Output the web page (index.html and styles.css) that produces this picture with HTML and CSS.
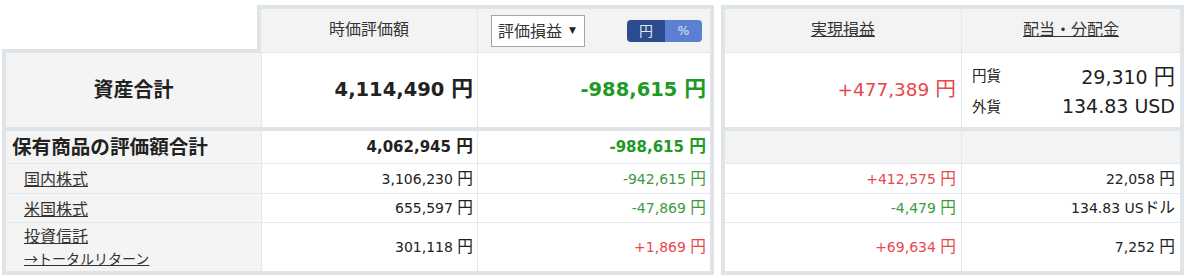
FILE: index.html
```html
<!DOCTYPE html>
<html lang="ja">
<head>
<meta charset="utf-8">
<title>資産合計</title>
<link rel="stylesheet" href="styles.css">
</head>
<body>
<div class="wrap">
  <table class="tbl tbl-left">
    <colgroup><col class="c-label"><col class="c-val"><col class="c-gain"></colgroup>
    <thead>
      <tr>
        <th class="blank"></th>
        <th class="h">時価評価額</th>
        <th class="h h-last">
          <div class="sel-row">
            <span class="select">評価損益<span class="caret">▼</span></span>
            <span class="toggle"><span class="t-yen">円</span><span class="t-pct">%</span></span>
          </div>
        </th>
      </tr>
    </thead>
    <tbody>
      <tr class="r-total">
        <th class="lbl lbl-big">資産合計</th>
        <td class="num num-big">4,114,490 <span class="yen">円</span></td>
        <td class="num num-big green-b c-last">-988,615 <span class="yen">円</span></td>
      </tr>
      <tr class="r-sum">
        <th class="lbl lbl-sum">保有商品の評価額合計</th>
        <td class="num num-bold">4,062,945 <span class="yen">円</span></td>
        <td class="num num-bold green-b c-last">-988,615 <span class="yen">円</span></td>
      </tr>
      <tr class="r-item r-30">
        <th class="lbl lbl-item"><a href="#">国内株式</a></th>
        <td class="num">3,106,230 <span class="yen">円</span></td>
        <td class="num green c-last">-942,615 <span class="yen">円</span></td>
      </tr>
      <tr class="r-item r-29">
        <th class="lbl lbl-item"><a href="#">米国株式</a></th>
        <td class="num">655,597 <span class="yen">円</span></td>
        <td class="num green c-last">-47,869 <span class="yen">円</span></td>
      </tr>
      <tr class="r-item r-last">
        <th class="lbl lbl-item"><a href="#">投資信託</a><br><a href="#" class="small-link">→トータルリターン</a></th>
        <td class="num">301,118 <span class="yen">円</span></td>
        <td class="num red c-last">+1,869 <span class="yen">円</span></td>
      </tr>
    </tbody>
  </table>

  <table class="tbl tbl-right">
    <colgroup><col class="c-real"><col class="c-div"></colgroup>
    <thead>
      <tr>
        <th class="h h-first"><a href="#">実現損益</a></th>
        <th class="h h-last"><a href="#">配当・分配金</a></th>
      </tr>
    </thead>
    <tbody>
      <tr class="r-total">
        <td class="num num-big-r red c-first">+477,389 <span class="yen">円</span></td>
        <td class="div-cell c-last">
          <div class="div-grid">
            <span class="cur">円貨</span><span class="cur-val">29,310 <span class="yen">円</span></span>
            <span class="cur">外貨</span><span class="cur-val">134.83 USD</span>
          </div>
        </td>
      </tr>
      <tr class="r-sum">
        <td class="gray c-first"></td>
        <td class="gray c-last"></td>
      </tr>
      <tr class="r-item r-30">
        <td class="num red c-first">+412,575 <span class="yen">円</span></td>
        <td class="num c-last">22,058 <span class="yen">円</span></td>
      </tr>
      <tr class="r-item r-29">
        <td class="num green c-first">-4,479 <span class="yen">円</span></td>
        <td class="num c-last">134.83 US<span class="yen">ドル</span></td>
      </tr>
      <tr class="r-item r-last">
        <td class="num red c-first">+69,634 <span class="yen">円</span></td>
        <td class="num c-last">7,252 <span class="yen">円</span></td>
      </tr>
    </tbody>
  </table>
</div>
</body>
</html>
```

FILE: styles.css
```css
* { box-sizing: border-box; }

body {
  margin: 0;
  background: #fff;
  color: #333;
  font-family: "DejaVu Sans", "Noto Sans CJK JP", sans-serif;
}

a { color: #333; text-decoration: underline; }

.wrap {
  display: flex;
  align-items: flex-start;
  gap: 7px;
  padding: 5px 0 0 2px;
}

.tbl {
  border-collapse: separate;
  border-spacing: 0;
  table-layout: fixed;
}
.tbl-left { width: 712px; }
.tbl-right { width: 463px; }
.c-label { width: 259px; }
.c-val { width: 216px; }
.c-gain { width: 237px; }
.c-real { width: 240px; }
.c-div { width: 223px; }

th, td {
  padding: 0;
  font-weight: normal;
  vertical-align: middle;
}

/* header */
.blank {
  height: 48px;
  background: #fff;
  border-right: 4px solid #dfe4e9;
  border-bottom: 4px solid #dfe4e9;
}
.h {
  height: 48px;
  background: #f3f3f3;
  border-top: 4px solid #dfe4e9;
  border-bottom: 1px solid #e3e7eb;
  text-align: center;
  font-family: "Noto Sans CJK JP", sans-serif;
  font-size: 16px;
  line-height: 20px;
  color: #333;
  padding-bottom: 5px;
}
.h + .h { border-left: 1px solid #e3e7eb; }
.h-first { border-left: 4px solid #dfe4e9; }
.h-last { border-right: 4px solid #dfe4e9; }
.tbl-left .h-last { padding-bottom: 0; }

.sel-row {
  display: flex;
  align-items: center;
  justify-content: space-between;
  padding: 0 8px 0 13px;
}
.select {
  display: flex;
  align-items: center;
  height: 32px;
  width: 94px;
  padding: 0 0 2px 6px;
  border: 1px solid #a6a6a6;
  background: #fff;
  font-size: 16px;
  color: #333;
}
.caret {
  font-family: "DejaVu Sans", sans-serif;
  font-size: 9px;
  margin-left: 7px;
  color: #222;
}
.toggle {
  display: flex;
  height: 22px;
  border-radius: 4px;
  overflow: hidden;
  font-size: 14px;
  line-height: 21px;
  color: #dfe7f7;
}
.t-yen { width: 38px; background: #2d4b8f; }
.t-pct { width: 37px; background: #5b80d2; font-family: "DejaVu Sans", sans-serif; font-size: 12.5px; }

/* body cells */
.lbl {
  background: #f4f4f4;
  border-left: 4px solid #dfe4e9;
  font-family: "Noto Sans CJK JP", sans-serif;
  color: #222;
}
td { border-left: 1px solid #e3e7eb; background: #fff; }
td.c-first { border-left: 4px solid #dfe4e9; }
.c-last { border-right: 4px solid #dfe4e9; }

.r-total > * { height: 78px; border-bottom: 4px solid #dfe4e9; }
.r-sum > * { height: 33px; border-bottom: 1px solid #e3e7eb; }
.r-30 > * { height: 30px; border-bottom: 1px solid #e3e7eb; }
.r-29 > * { height: 29px; border-bottom: 1px solid #e3e7eb; }
.r-last > * { height: 52px; border-bottom: 4px solid #dfe4e9; }

.lbl-big {
  text-align: center;
  font-size: 20px;
  font-weight: bold;
  padding-bottom: 3px;
}
.lbl-sum {
  text-align: left;
  font-size: 19.6px;
  font-weight: bold;
  padding-left: 6px;
  line-height: 24px;
  padding-bottom: 3px;
}
.lbl-item {
  text-align: left;
  font-size: 16px;
  line-height: 22px;
  padding-left: 18px;
  font-weight: normal;
  padding-bottom: 1px;
}
.small-link { font-size: 14px; }

.num {
  text-align: right;
  padding-right: 4px;
  font-size: 14px;
  line-height: 20px;
  color: #222;
  white-space: nowrap;
  padding-bottom: 1px;
}
.tbl-right .num { padding-right: 5px; }
.num-bold { font-weight: bold; font-size: 15px; padding-bottom: 2px; }
.num-big { font-size: 19.5px; font-weight: bold; line-height: 26px; padding-bottom: 3px; }
.num-big-r { font-size: 18.5px; line-height: 26px; padding-bottom: 3px; }

.yen {
  font-family: "Noto Sans CJK JP", sans-serif;
  font-size: 1.12em;
}

.green-b { color: #1f9a24; }
.green { color: #3c9a3c; }
.red { color: #e8474c; }
.gray { background: #f3f3f3; }

.div-cell { padding: 0 5px 0 10px; }
.div-grid {
  display: grid;
  grid-template-columns: auto 1fr;
  grid-auto-rows: 31px;
  align-items: center;
}
.cur {
  font-family: "Noto Sans CJK JP", sans-serif;
  font-size: 14.5px;
  color: #222;
}
.cur-val {
  text-align: right;
  font-size: 19px;
  color: #222;
  white-space: nowrap;
}
```
